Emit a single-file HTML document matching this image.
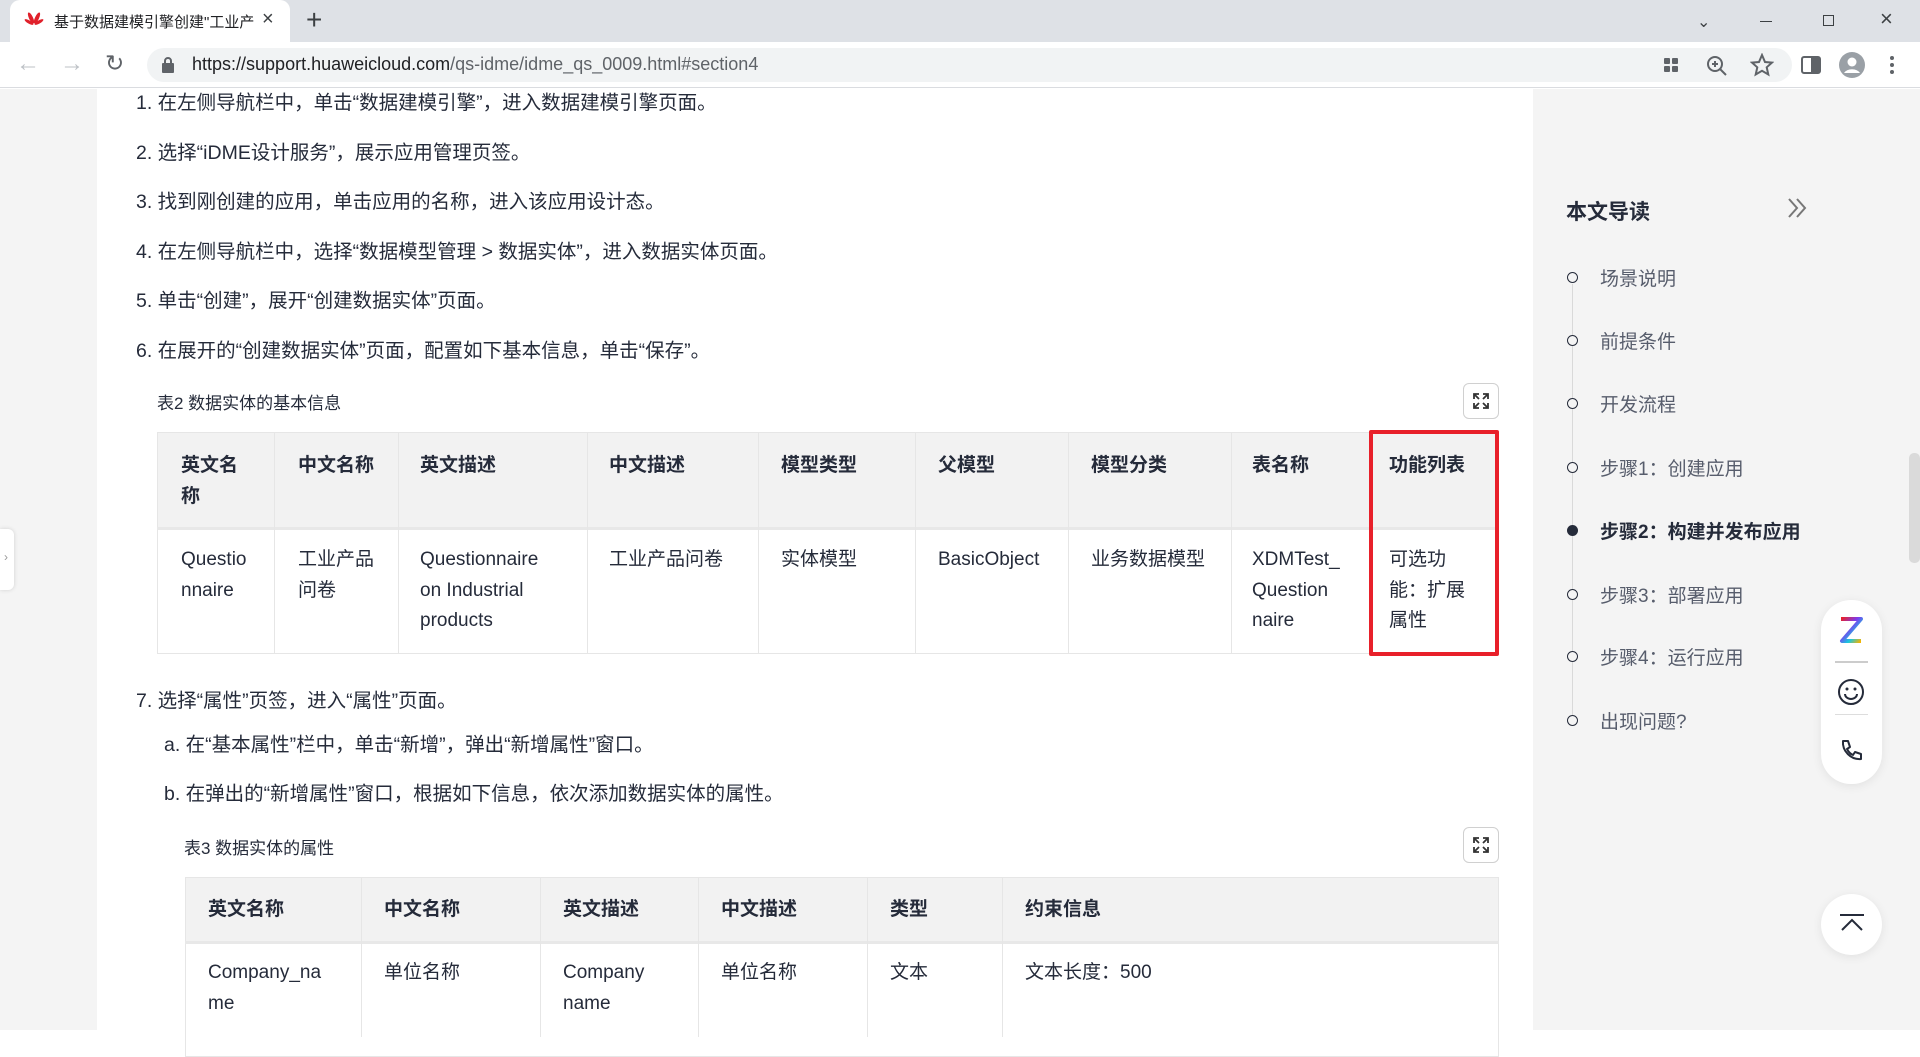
<!DOCTYPE html>
<html><head><meta charset="utf-8"><style>
*{margin:0;padding:0;box-sizing:border-box}
body{width:1920px;height:1030px;overflow:hidden;position:relative;background:#fff;font-family:"Liberation Sans","Noto Sans CJK SC",sans-serif;color:#252b3a}
.a{position:absolute;white-space:nowrap}
.t{font-size:19.5px;color:#252b3a}
.cap{font-size:17px;color:#252b3a}
.h{font-weight:bold;font-size:19px;color:#252b3a;line-height:31px}
.c{font-size:19px;color:#252b3a;line-height:30.5px}
.side{font-size:19px;color:#575d6c}
.ic{stroke:#5f6368;fill:none;stroke-width:2}
</style></head><body>
<div class="a" style="left:0;top:0;width:1920px;height:42px;background:#dee1e6"></div>
<div class="a" style="left:10px;top:0;width:280px;height:43px;background:#fff;border-radius:10px 10px 0 0"></div>
<div class="a" style="left:24px;top:11px;width:20px;height:20px"><svg width="20" height="20"><g fill="#e0202a"><ellipse cx="7" cy="7" rx="2" ry="6" transform="rotate(-25 7 7)"/><ellipse cx="13" cy="7" rx="2" ry="6" transform="rotate(25 13 7)"/><ellipse cx="5" cy="11" rx="1.6" ry="5" transform="rotate(-60 5 11)"/><ellipse cx="15" cy="11" rx="1.6" ry="5" transform="rotate(60 15 11)"/></g></svg></div>
<div class="a" style="left:54px;top:11px;font-size:15px;color:#202124">基于数据建模引擎创建"工业产</div>
<div class="a" style="left:262px;top:8px;font-size:20px;color:#3c4043">×</div>
<div class="a" style="left:306px;top:4px;font-size:28px;color:#3c4043;font-weight:300">+</div>
<div class="a" style="left:1697px;top:12px;font-size:16px;color:#3c4043">⌄</div>
<div class="a" style="left:1760px;top:21px;width:12px;height:1px;background:#3c4043"></div>
<div class="a" style="left:1823px;top:15px;width:11px;height:11px;border:1px solid #3c4043"></div>
<div class="a" style="left:1880px;top:6px;font-size:22px;color:#3c4043">×</div>
<div class="a" style="left:0;top:42px;width:1920px;height:46px;background:#fff;border-bottom:1px solid #dadce0"></div>
<div class="a" style="left:16px;top:50px;font-size:24px;color:#bdc1c6">←</div>
<div class="a" style="left:60px;top:50px;font-size:24px;color:#bdc1c6">→</div>
<div class="a" style="left:105px;top:50px;font-size:23px;color:#5f6368">↻</div>
<div class="a" style="left:147px;top:48px;width:1645px;height:34px;background:#f1f3f4;border-radius:17px"></div>
<div class="a" style="left:162px;top:57px;width:12px;height:15px"><svg width="12" height="16"><rect x="0" y="6" width="12" height="10" rx="1" fill="#5f6368"/><path d="M3 7V4a3 3 0 0 1 6 0v3" stroke="#5f6368" stroke-width="2" fill="none"/></svg></div>
<div class="a" style="left:192px;top:54px;font-size:18px;color:#202124">https://<span>support.huaweicloud.com</span><span style="color:#5f6368">/qs-idme/idme_qs_0009.html#section4</span></div>
<svg class="a" style="left:1660px;top:54px" width="22" height="22"><rect x="4" y="4" width="6" height="6" rx="1" fill="#5f6368"/><rect x="12" y="4" width="6" height="6" rx="1" fill="#5f6368"/><rect x="4" y="12" width="6" height="6" rx="1" fill="#5f6368"/><rect x="12" y="12" width="6" height="6" rx="1" fill="#5f6368"/></svg>
<svg class="a" style="left:1705px;top:54px" width="24" height="24"><circle cx="10" cy="10" r="7" class="ic"/><path d="M15 15l6 6M7 10h6M10 7v6" class="ic"/></svg>
<svg class="a" style="left:1750px;top:53px" width="24" height="24"><path d="M12 2l3 7 7 .6-5.3 4.7 1.6 7.2L12 17.8 5.7 21.5l1.6-7.2L2 9.6 9 9z" class="ic"/></svg>
<svg class="a" style="left:1801px;top:55px" width="20" height="20"><rect x="1" y="2" width="18" height="16" rx="2" class="ic"/><rect x="10" y="2" width="9" height="16" fill="#5f6368"/></svg>
<svg class="a" style="left:1838px;top:51px" width="28" height="28"><circle cx="14" cy="14" r="13" fill="#9aa0a6"/><circle cx="14" cy="11" r="4.5" fill="#fff"/><path d="M6 22a9 7 0 0 1 16 0" fill="#fff"/></svg>
<svg class="a" style="left:1889px;top:54px" width="6" height="22"><circle cx="3" cy="4" r="2" fill="#5f6368"/><circle cx="3" cy="11" r="2" fill="#5f6368"/><circle cx="3" cy="18" r="2" fill="#5f6368"/></svg>
<div class="a" style="left:0;top:89px;width:97px;height:941px;background:#f4f4f4"></div>
<div class="a" style="left:0;top:529px;width:14px;height:61px;background:#fff;border-radius:0 6px 6px 0;box-shadow:0 0 4px rgba(0,0,0,.15)"></div>
<div class="a" style="left:4px;top:550px;font-size:12px;color:#999">›</div>
<div class="a" style="left:1533px;top:89px;width:387px;height:941px;background:#f4f4f4"></div>
<div class="a" style="left:1909px;top:453px;width:11px;height:110px;background:#dadada;border-radius:5px"></div>

<div class="a t" style="left:136px;top:86px">1. 在左侧导航栏中，单击“数据建模引擎”，进入数据建模引擎页面。</div>
<div class="a t" style="left:136px;top:136px">2. 选择“iDME设计服务”，展示应用管理页签。</div>
<div class="a t" style="left:136px;top:185px">3. 找到刚创建的应用，单击应用的名称，进入该应用设计态。</div>
<div class="a t" style="left:136px;top:235px">4. 在左侧导航栏中，选择“数据模型管理 &gt; 数据实体”，进入数据实体页面。</div>
<div class="a t" style="left:136px;top:284px">5. 单击“创建”，展开“创建数据实体”页面。</div>
<div class="a t" style="left:136px;top:334px">6. 在展开的“创建数据实体”页面，配置如下基本信息，单击“保存”。</div>
<div class="a cap" style="left:157px;top:389px">表2 数据实体的基本信息</div>
<div class="a" style="left:1463px;top:383px;width:36px;height:36px;border:1px solid #d0d0d0;border-radius:6px;background:#fff"></div>
<svg class="a" style="left:1472px;top:392px" width="18" height="18"><path d="M2 7V2h5M2 2l5 5M16 7V2h-5M16 2l-5 5M2 11v5h5M2 16l5-5M16 11v5h-5M16 16l-5-5" stroke="#333" stroke-width="1.8" fill="none"/></svg>

<div class="a" style="left:157px;top:432px;width:1342px;height:96px;background:#f2f2f2"></div>
<div class="a" style="left:157px;top:432px;width:1342px;height:222px;border:1.5px solid #e6e6e6"></div>
<div class="a" style="left:157px;top:527px;width:1342px;height:3px;background:#e8e8e8"></div>
<div class="a" style="left:274px;top:432px;width:1px;height:222px;background:#e6e6e6"></div>
<div class="a" style="left:398px;top:432px;width:1px;height:222px;background:#e6e6e6"></div>
<div class="a" style="left:587px;top:432px;width:1px;height:222px;background:#e6e6e6"></div>
<div class="a" style="left:758px;top:432px;width:1px;height:222px;background:#e6e6e6"></div>
<div class="a" style="left:915px;top:432px;width:1px;height:222px;background:#e6e6e6"></div>
<div class="a" style="left:1068px;top:432px;width:1px;height:222px;background:#e6e6e6"></div>
<div class="a" style="left:1231px;top:432px;width:1px;height:222px;background:#e6e6e6"></div>
<div class="a h" style="left:181px;top:450px">英文名<br>称</div>
<div class="a h" style="left:298px;top:450px">中文名称</div>
<div class="a h" style="left:420px;top:450px">英文描述</div>
<div class="a h" style="left:609px;top:450px">中文描述</div>
<div class="a h" style="left:781px;top:450px">模型类型</div>
<div class="a h" style="left:938px;top:450px">父模型</div>
<div class="a h" style="left:1091px;top:450px">模型分类</div>
<div class="a h" style="left:1252px;top:450px">表名称</div>
<div class="a h" style="left:1389px;top:450px">功能列表</div>
<div class="a c" style="left:181px;top:545px">Questio<br>nnaire</div>
<div class="a c" style="left:298px;top:545px">工业产品<br>问卷</div>
<div class="a c" style="left:420px;top:545px">Questionnaire<br>on Industrial<br>products</div>
<div class="a c" style="left:609px;top:545px">工业产品问卷</div>
<div class="a c" style="left:781px;top:545px">实体模型</div>
<div class="a c" style="left:938px;top:545px">BasicObject</div>
<div class="a c" style="left:1091px;top:545px">业务数据模型</div>
<div class="a c" style="left:1252px;top:545px">XDMTest_<br>Question<br>naire</div>
<div class="a c" style="left:1389px;top:545px">可选功<br>能：扩展<br>属性</div>
<div class="a" style="left:1369px;top:430px;width:130px;height:226px;border:4px solid #e8202a;border-radius:2px"></div>

<div class="a t" style="left:136px;top:684px">7. 选择“属性”页签，进入“属性”页面。</div>
<div class="a t" style="left:164px;top:728px">a. 在“基本属性”栏中，单击“新增”，弹出“新增属性”窗口。</div>
<div class="a t" style="left:164px;top:777px">b. 在弹出的“新增属性”窗口，根据如下信息，依次添加数据实体的属性。</div>
<div class="a cap" style="left:184px;top:834px">表3 数据实体的属性</div>
<div class="a" style="left:1463px;top:827px;width:36px;height:36px;border:1px solid #d0d0d0;border-radius:6px;background:#fff"></div>
<svg class="a" style="left:1472px;top:836px" width="18" height="18"><path d="M2 7V2h5M2 2l5 5M16 7V2h-5M16 2l-5 5M2 11v5h5M2 16l5-5M16 11v5h-5M16 16l-5-5" stroke="#333" stroke-width="1.8" fill="none"/></svg>

<div class="a" style="left:185px;top:877px;width:1314px;height:65px;background:#f2f2f2"></div>
<div class="a" style="left:185px;top:877px;width:1314px;height:180px;border:1.5px solid #e6e6e6"></div>
<div class="a" style="left:185px;top:941px;width:1314px;height:3px;background:#e8e8e8"></div>
<div class="a" style="left:361px;top:877px;width:1px;height:160px;background:#e6e6e6"></div>
<div class="a" style="left:540px;top:877px;width:1px;height:160px;background:#e6e6e6"></div>
<div class="a" style="left:698px;top:877px;width:1px;height:160px;background:#e6e6e6"></div>
<div class="a" style="left:867px;top:877px;width:1px;height:160px;background:#e6e6e6"></div>
<div class="a" style="left:1002px;top:877px;width:1px;height:160px;background:#e6e6e6"></div>
<div class="a h" style="left:208px;top:894px">英文名称</div>
<div class="a h" style="left:384px;top:894px">中文名称</div>
<div class="a h" style="left:563px;top:894px">英文描述</div>
<div class="a h" style="left:721px;top:894px">中文描述</div>
<div class="a h" style="left:890px;top:894px">类型</div>
<div class="a h" style="left:1025px;top:894px">约束信息</div>
<div class="a c" style="left:208px;top:958px">Company_na<br>me</div>
<div class="a c" style="left:384px;top:958px">单位名称</div>
<div class="a c" style="left:563px;top:958px">Company<br>name</div>
<div class="a c" style="left:721px;top:958px">单位名称</div>
<div class="a c" style="left:890px;top:958px">文本</div>
<div class="a c" style="left:1025px;top:958px">文本长度：500</div>

<div class="a" style="left:1566px;top:196px;font-size:21px;font-weight:bold;color:#252b3a">本文导读</div>
<svg class="a" style="left:1786px;top:196px" width="24" height="24"><path d="M3 3l8 9-8 9M11 3l8 9-8 9" stroke="#777" stroke-width="2" fill="none"/></svg>
<div class="a" style="left:1572px;top:284px;width:1px;height:436px;background:#d9d9d9"></div>
<div class="a" style="left:1567px;top:272px;width:11px;height:11px;border:1.5px solid #252b3a;border-radius:50%;background:#f4f4f4"></div>
<div class="a" style="left:1567px;top:335px;width:11px;height:11px;border:1.5px solid #252b3a;border-radius:50%;background:#f4f4f4"></div>
<div class="a" style="left:1567px;top:398px;width:11px;height:11px;border:1.5px solid #252b3a;border-radius:50%;background:#f4f4f4"></div>
<div class="a" style="left:1567px;top:462px;width:11px;height:11px;border:1.5px solid #252b3a;border-radius:50%;background:#f4f4f4"></div>
<div class="a" style="left:1567px;top:525px;width:11px;height:11px;border-radius:50%;background:#252b3a"></div>
<div class="a" style="left:1567px;top:589px;width:11px;height:11px;border:1.5px solid #252b3a;border-radius:50%;background:#f4f4f4"></div>
<div class="a" style="left:1567px;top:651px;width:11px;height:11px;border:1.5px solid #252b3a;border-radius:50%;background:#f4f4f4"></div>
<div class="a" style="left:1567px;top:715px;width:11px;height:11px;border:1.5px solid #252b3a;border-radius:50%;background:#f4f4f4"></div>
<div class="a side" style="left:1600px;top:264px">场景说明</div>
<div class="a side" style="left:1600px;top:327px">前提条件</div>
<div class="a side" style="left:1600px;top:390px">开发流程</div>
<div class="a side" style="left:1600px;top:454px">步骤1：创建应用</div>
<div class="a side" style="left:1600px;top:517px;font-weight:bold;color:#252b3a">步骤2：构建并发布应用</div>
<div class="a side" style="left:1600px;top:581px">步骤3：部署应用</div>
<div class="a side" style="left:1600px;top:643px">步骤4：运行应用</div>
<div class="a side" style="left:1600px;top:707px">出现问题?</div>

<div class="a" style="left:1821px;top:600px;width:61px;height:184px;background:#fff;border-radius:30px;box-shadow:0 2px 10px rgba(0,0,0,.08)"></div>
<svg class="a" style="left:1838px;top:616px" width="26" height="28"><path d="M3 3h20L4 25h19" stroke="url(#g)" stroke-width="4" fill="none" stroke-linejoin="round"/><defs><linearGradient id="g" x1="0" y1="0" x2="1" y2="1"><stop offset="0" stop-color="#e8202a"/><stop offset=".4" stop-color="#7b3cf0"/><stop offset=".7" stop-color="#18c8e0"/><stop offset="1" stop-color="#f5b400"/></linearGradient></defs></svg>
<div class="a" style="left:1835px;top:661px;width:33px;height:2px;background:#ccc"></div>
<svg class="a" style="left:1837px;top:678px" width="28" height="28"><circle cx="14" cy="14" r="12" stroke="#252b3a" stroke-width="2" fill="none"/><circle cx="10" cy="11" r="1.5" fill="#252b3a"/><circle cx="18" cy="11" r="1.5" fill="#252b3a"/><path d="M8 16a6 5 0 0 0 12 0" stroke="#252b3a" stroke-width="2" fill="none"/></svg>
<div class="a" style="left:1835px;top:714px;width:33px;height:1px;background:#ddd"></div>
<svg class="a" style="left:1838px;top:738px" width="26" height="26"><path d="M5 3l5 0 2 6-3 2c1.5 3 3.5 5 6 6l2-3 6 2v5c-10 1-19-8-18-18z" stroke="#252b3a" stroke-width="2" fill="none" stroke-linejoin="round"/></svg>
<div class="a" style="left:1821px;top:894px;width:61px;height:61px;background:#fff;border-radius:50%;box-shadow:0 2px 10px rgba(0,0,0,.08)"></div>
<svg class="a" style="left:1837px;top:910px" width="30" height="30"><path d="M3 5h24M5 20l10-10 10 10" stroke="#252b3a" stroke-width="2" fill="none"/></svg>
</body></html>
